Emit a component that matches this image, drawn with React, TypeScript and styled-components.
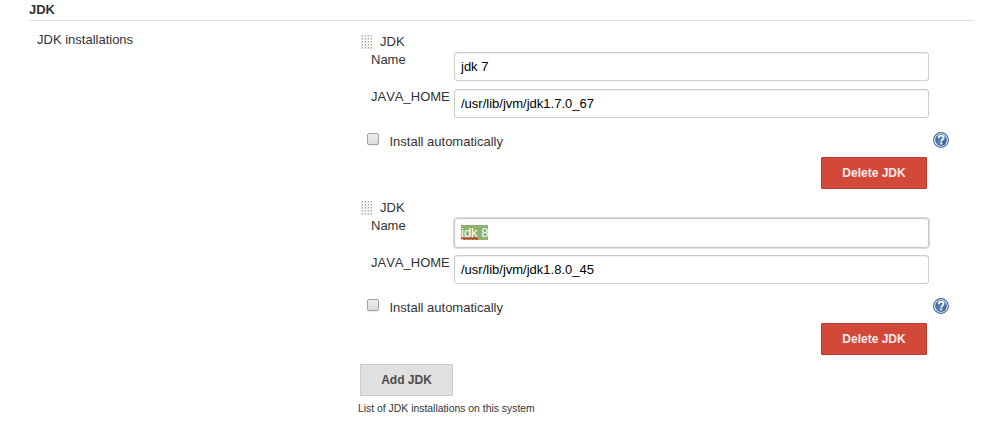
import React from 'react';
import styled, { createGlobalStyle } from 'styled-components';

const GlobalStyle = createGlobalStyle`
  *, *::before, *::after { box-sizing: border-box; }
  body {
    margin: 0;
    background: #fff;
    color: #333;
    font: 13px/15px "Liberation Sans", Arial, sans-serif;
    font-kerning: none;
  }
`;

const Page = styled.main`
  padding: 2px 13px 0 29px;
  width: 987px;
  height: 421px;
  overflow: hidden;
`;

const SectionTitle = styled.h1`
  margin: 0;
  height: 19px;
  border-bottom: 1px solid #ddd;
  font-size: 13px;
  line-height: 15px;
  font-weight: bold;
`;

const Section = styled.section`
  display: grid;
  grid-template-columns: 321px 599px;
  padding: 11px 0 0 8px;
`;

const SectionLabel = styled.div``;

const Entry = styled.div`
  height: 166px;
  padding: 2px 0 0 3px;
`;

const EntryHeader = styled.div`
  display: flex;
  gap: 8px;
  height: 18px;
`;

const Grip = styled.svg`
  display: block;
  margin-top: 1px;
  width: 11px;
  height: 14px;
`;

const FormRow = styled.label`
  display: grid;
  grid-template-columns: 83px 475px;
  height: 37px;
  padding-left: 10px;
`;

const TextField = styled.div<{ $focused?: boolean }>`
  height: ${(p) => (p.$focused ? 30 : 29)}px;
  padding: 6px;
  border: 1px solid ${(p) => (p.$focused ? '#c8c8c8' : '#ccc')};
  border-radius: 3px;
  box-shadow: ${(p) =>
    p.$focused
      ? 'inset 0 0 1px rgba(0, 0, 0, 0.2), 0 0 1px 0.5px rgba(0, 0, 0, 0.14)'
      : 'inset 0 1px 1px rgba(0, 0, 0, 0.075)'};
  color: #000;
  white-space: pre;
`;

const Selected = styled.span`
  display: inline-block;
  height: 15px;
  background: #8fb070;
  color: #fff;
`;

const Misspelled = styled.span`
  position: relative;
`;

const Squiggle = styled.svg`
  position: absolute;
  left: 0;
  top: 12px;
  width: 17px;
  height: 3px;
`;

const OptionRow = styled.div`
  display: flex;
  align-items: flex-start;
  height: 31px;
  padding: 6px 0 0 6px;
`;

const Checkbox = styled.span`
  width: 12px;
  height: 12px;
  margin: 1px 10.5px 0 0;
  border: 1px solid #a2a2a2;
  border-radius: 2px;
  background: linear-gradient(#ededed, #dcdcdc);
  box-shadow: 0 1px 1px rgba(0, 0, 0, 0.08);
`;

const OptionText = styled.span`
  width: 543.5px;
  padding-top: 2px;
`;

const HelpIcon = styled.svg`
  display: block;
  width: 16px;
  height: 16px;
`;

const Button = styled.button<{ $danger?: boolean }>`
  display: block;
  width: ${(p) => (p.$danger ? 106 : 93)}px;
  height: 32px;
  margin: 0;
  padding: 0;
  border: 1px solid ${(p) => (p.$danger ? '#b83a2a' : '#ccc')};
  border-radius: 1px;
  background: ${(p) => (p.$danger ? '#d24939' : '#e0e0e0')};
  color: ${(p) => (p.$danger ? '#f5eaea' : '#4d4d4d')};
  font: bold 12px/30px "Liberation Sans", Arial, sans-serif;
`;

const DeleteRow = styled.div`
  padding-left: 460px;
`;

const Footer = styled.div`
  padding-left: 2px;
`;

const Note = styled.div`
  margin: 6px 0 0 -2px;
  font-size: 10.4px;
  line-height: 13px;
`;

function DragHandle() {
  const dots = [];
  for (let y = 0; y < 5; y++) {
    for (let x = 0; x < 4; x++) {
      dots.push(
        <React.Fragment key={`${x}-${y}`}>
          <rect x={x * 3} y={y * 3} width="2" height="2" fill="#d9d9d6" />
          <rect x={x * 3} y={y * 3} width="1" height="1" fill="#e9e9e9" />
          <rect x={x * 3 + 1} y={y * 3} width="1" height="1" fill="#a5a5a0" />
        </React.Fragment>,
      );
    }
  }
  return <Grip viewBox="0 0 11 14" shapeRendering="crispEdges">{dots}</Grip>;
}

function Help() {
  return (
    <HelpIcon viewBox="0 0 16 16">
      <defs>
        <linearGradient id="help-fill" x1="0" y1="0" x2="1" y2="1">
          <stop offset="0" stopColor="#284f8c" />
          <stop offset="0.5" stopColor="#5a85bb" />
          <stop offset="1" stopColor="#21477f" />
        </linearGradient>
      </defs>
      <circle cx="8" cy="8" r="7.4" fill="#fff" stroke="#3c659d" strokeWidth="1.1" />
      <circle cx="8" cy="8" r="5.9" fill="url(#help-fill)" />
      <path
        d="M5.6 6.2C5.6 4.5 6.7 3.7 8.1 3.7c1.5 0 2.5.8 2.5 2.1 0 1.7-2.3 1.8-2.3 3.6"
        fill="none"
        stroke="#fff"
        strokeWidth="1.7"
      />
      <rect x="7.3" y="10.4" width="2" height="2" fill="#fff" />
    </HelpIcon>
  );
}

interface JdkProps {
  name: React.ReactNode;
  home: string;
  focused?: boolean;
}

function JdkEntry({ name, home, focused }: JdkProps) {
  return (
    <Entry>
      <EntryHeader>
        <DragHandle />
        <span>JDK</span>
      </EntryHeader>
      <FormRow>
        <span>Name</span>
        <TextField role="textbox" $focused={focused}>{name}</TextField>
      </FormRow>
      <FormRow>
        <span>JAVA_HOME</span>
        <TextField role="textbox">{home}</TextField>
      </FormRow>
      <OptionRow>
        <Checkbox role="checkbox" aria-checked={false} />
        <OptionText>Install automatically</OptionText>
        <Help />
      </OptionRow>
      <DeleteRow>
        <Button $danger>Delete JDK</Button>
      </DeleteRow>
    </Entry>
  );
}

function SelectedName() {
  return (
    <Selected>
      <Misspelled>
        jdk
        <Squiggle viewBox="0 0 17 3">
          <path
            d="M0 2.2L1.5.8 3.5 2.2 5.5.8 7.5 2.2 9.5.8 11.5 2.2 13.5.8 15.5 2.2 17 1"
            fill="none"
            stroke="#e01208"
            strokeWidth="1.1"
          />
        </Squiggle>
      </Misspelled>
      {' 8'}
    </Selected>
  );
}

export default function App() {
  return (
    <>
      <GlobalStyle />
      <Page>
        <SectionTitle>JDK</SectionTitle>
        <Section>
          <SectionLabel>JDK installations</SectionLabel>
          <div>
            <JdkEntry name="jdk 7" home="/usr/lib/jvm/jdk1.7.0_67" />
            <JdkEntry
              name={<SelectedName />}
              home="/usr/lib/jvm/jdk1.8.0_45"
              focused
            />
            <Footer>
              <Button>Add JDK</Button>
              <Note>List of JDK installations on this system</Note>
            </Footer>
          </div>
        </Section>
      </Page>
    </>
  );
}
